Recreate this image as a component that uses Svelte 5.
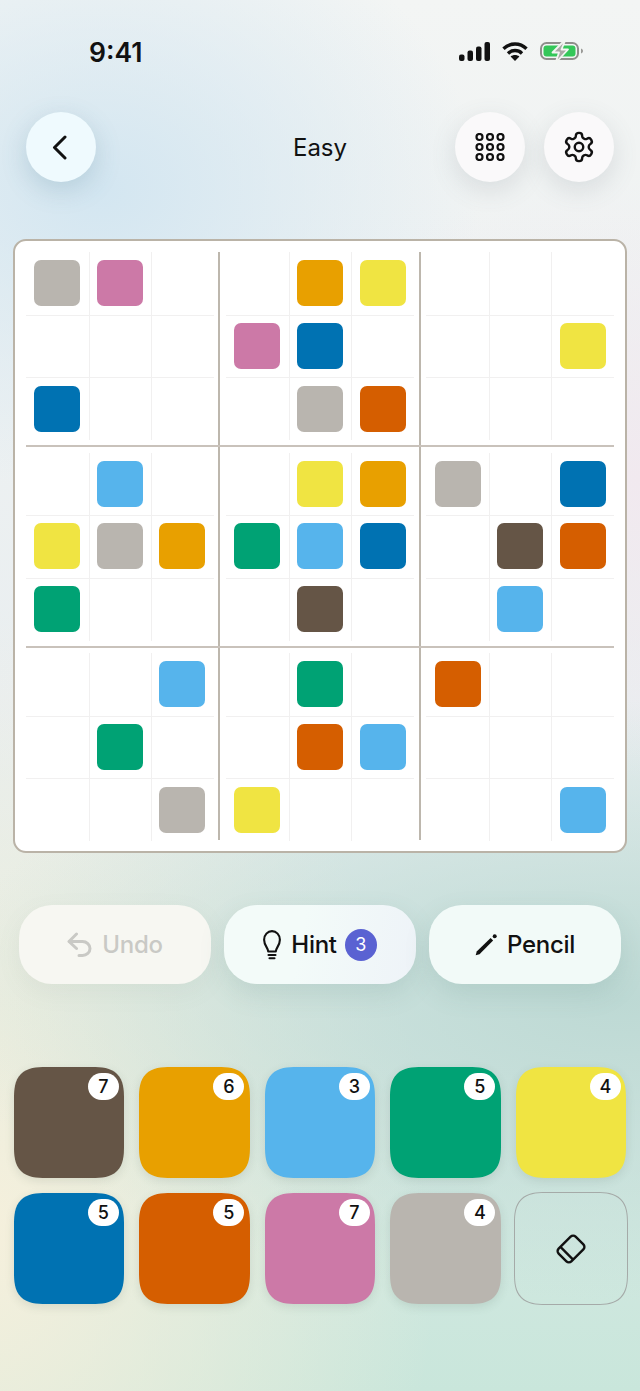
<script>
	// Colour sudoku screen: board of 9 blocks, action pills, colour palette.
	const colors = {
		b: '#655546',
		a: '#e8a000',
		s: '#56b4ec',
		g: '#00a274',
		y: '#f0e442',
		d: '#0072b2',
		o: '#d55e00',
		p: '#cc79a7',
		k: '#b9b5af'
	};

	const rows = [
		'kp..ay...',
		'...pd...y',
		'd...ko...',
		'.s..yak.d',
		'ykagsd.bo',
		'g...b..s.',
		'..s.g.o..',
		'.g..os...',
		'..ky....s'
	];

	// rows come in reading order, blocks want them grouped by 3x3
	const blocks = [];
	for (let br = 0; br < 3; br++) {
		for (let bc = 0; bc < 3; bc++) {
			const cells = [];
			for (let r = 0; r < 3; r++) {
				for (let c = 0; c < 3; c++) {
					cells.push(rows[br * 3 + r][bc * 3 + c]);
				}
			}
			blocks.push(cells);
		}
	}

	const palette = [
		['b', 7],
		['a', 6],
		['s', 3],
		['g', 5],
		['y', 4],
		['d', 5],
		['o', 5],
		['p', 7],
		['k', 4]
	];
</script>

<div class="screen">
	<div class="status">
		<span class="time">9:41</span>
		<div class="status-icons">
			<svg width="31" height="19" viewBox="0 0 31 19" fill="#111">
				<rect x="0" y="12.5" width="5.5" height="6.5" rx="2" />
				<rect x="8.5" y="8.5" width="5.5" height="10.5" rx="2" />
				<rect x="17" y="4.5" width="5.5" height="14.5" rx="2" />
				<rect x="25.5" y="0" width="5.5" height="19" rx="2" />
			</svg>
			<svg width="26" height="19" viewBox="0 0 26 19" fill="none" stroke="#111" stroke-width="3.4">
				<path d="M1.5 6.8C8 .4 18 .4 24.5 6.8" />
				<path d="M6 11.4c4-3.8 10-3.8 14 0" />
				<path d="M13 19l-4.4-4.600c2.500-2 6.300-2 8.800 0z" fill="#111" stroke="none" />
			</svg>
			<svg class="battery" width="44" height="18" viewBox="0 0 44 18" fill="none">
				<rect x="1" y="1" width="37" height="16" rx="5.5" stroke="#8f8f8c" stroke-width="2" />
				<rect x="3.500" y="3.500" width="32" height="11" rx="3" fill="#34c759" />
				<path d="M41 6.500c1.400.4 2 1.300 2 2.500s-.6 2.100-2 2.500z" fill="#9a9a97" />
				<path d="M25.500-2.500 12.500 10.500h6.500L15.500 21 28 7.500h-6.500z" fill="#a9a9a5" stroke="#f3f5f2" stroke-width="1.800" stroke-linejoin="round" />
			</svg>
		</div>
	</div>

	<header class="topbar">
		<button class="round round-back" aria-label="Back">
			<svg width="16" height="25" viewBox="0 0 16 25" fill="none" stroke="#111" stroke-width="3" stroke-linecap="round" stroke-linejoin="round">
				<path d="M13 2 2.500 12.500 13 23" />
			</svg>
		</button>
		<h1>Easy</h1>
		<div class="topbar-right">
			<button class="round" aria-label="Levels">
				<svg width="30" height="28" viewBox="0 0 30 28" fill="none" stroke="#111" stroke-width="2.200">
					{#each [4, 14, 24] as y}
						{#each [4.500, 15, 25.500] as x}
							<circle cx={x} cy={y} r="3" />
						{/each}
					{/each}
				</svg>
			</button>
			<button class="round" aria-label="Settings">
				<svg width="34" height="34" viewBox="0 0 24 24" fill="none" stroke="#111" stroke-width="1.700" stroke-linecap="round" stroke-linejoin="round">
					<path d="M12.220 2h-.44a2 2 0 0 0-2 2v.18a2 2 0 0 1-1 1.730l-.43.25a2 2 0 0 1-2 0l-.15-.08a2 2 0 0 0-2.730.73l-.22.38a2 2 0 0 0 .73 2.730l.15.1a2 2 0 0 1 1 1.720v.51a2 2 0 0 1-1 1.740l-.15.09a2 2 0 0 0-.73 2.730l.22.38a2 2 0 0 0 2.730.73l.15-.08a2 2 0 0 1 2 0l.43.25a2 2 0 0 1 1 1.730V20a2 2 0 0 0 2 2h.44a2 2 0 0 0 2-2v-.18a2 2 0 0 1 1-1.730l.43-.25a2 2 0 0 1 2 0l.15.08a2 2 0 0 0 2.730-.73l.22-.39a2 2 0 0 0-.73-2.730l-.15-.08a2 2 0 0 1-1-1.740v-.5a2 2 0 0 1 1-1.740l.15-.09a2 2 0 0 0 .73-2.730l-.22-.38a2 2 0 0 0-2.730-.73l-.15.08a2 2 0 0 1-2 0l-.43-.25a2 2 0 0 1-1-1.730V4a2 2 0 0 0-2-2z" />
					<circle cx="12" cy="12" r="3" />
				</svg>
			</button>
		</div>
	</header>

	<section class="board">
		{#each blocks as cells}
			<div class="block">
				{#each cells as cell}
					<div class="cell">
						{#if cell !== '.'}
							<span class="tile" style="background: {colors[cell]}"></span>
						{/if}
					</div>
				{/each}
			</div>
		{/each}
		<span class="rule v v1"></span>
		<span class="rule v v2"></span>
		<span class="rule h h1"></span>
		<span class="rule h h2"></span>
	</section>

	<div class="actions">
		<button class="pill pill-off">
			<svg width="25" height="25" viewBox="0 0 25 25" fill="none" stroke="#c9c9c5" stroke-width="3" stroke-linecap="round" stroke-linejoin="round">
				<path d="M9.500 2 2 9.500 9.500 16.500" />
				<path d="M2.500 9.500H15.500a7.500 7 0 0 1 0 14h-3.500" />
			</svg>
			Undo
		</button>
		<button class="pill pill-hint">
			<svg width="18" height="30" viewBox="0 0 18 30" fill="none" stroke="#111" stroke-width="2.100" stroke-linecap="round" stroke-linejoin="round">
				<path d="M5.200 21.500c0-3.500-4.100-6-4.100-11.800a7.900 8.600 0 0 1 15.800 0c0 5.800-4.100 8.300-4.100 11.800z" />
				<path d="M5.500 25h7M6.500 28.300h5" />
			</svg>
			Hint
			<span class="hint-count">3</span>
		</button>
		<button class="pill">
			<svg width="22" height="22" viewBox="0 0 22 22" fill="#111">
				<path d="M.7 21.300 1.700 17.500 15.600 3.900l2.500 2.500L4.500 20.300z" />
				<circle cx="19.700" cy="2.300" r="2" />
			</svg>
			Pencil
		</button>
	</div>

	<div class="palette">
		{#each palette as [key, count]}
			<button class="swatch" style="background: {colors[key]}" aria-label="Colour, {count} left">
				<span class="count">{count}</span>
			</button>
		{/each}
		<button class="swatch eraser" aria-label="Erase">
			<svg width="34" height="34" viewBox="-17 -17 34 34" fill="none" stroke="#111" stroke-width="2.400" stroke-linejoin="round">
				<g transform="rotate(-45)">
					<rect x="-12" y="-9" width="24" height="18" rx="3.500" />
					<path d="M-6 -9V9" />
				</g>
			</svg>
		</button>
	</div>
</div>

<style>
	:global(body) {
		background: #e6ecea;
	}
	.screen {
		position: relative;
		width: 640px;
		height: 1391px;
		overflow: hidden;
		font-family: Inter, 'Noto Sans', sans-serif;
		color: #111;
		background:
			radial-gradient(380px 300px at 100px 190px, #d3e6f1 0%, rgba(211, 230, 241, 0) 100%),
			radial-gradient(420px 300px at 640px 480px, #f1e9ef 0%, rgba(241, 233, 239, 0) 100%),
			radial-gradient(680px 300px at 620px 1000px, #bdd9d4 0%, rgba(189, 217, 212, 0) 100%),
			radial-gradient(460px 620px at -20px 1230px, #f6f0dc 0%, rgba(246, 240, 220, 0) 100%),
			linear-gradient(180deg, #f3f5f4 0%, #e9eef0 50%, #c9e6db 100%);
	}
	.status {
		display: flex;
		align-items: flex-start;
		justify-content: space-between;
		height: 112px;
		padding: 42px 56px 0 89px;
		box-sizing: border-box;
	}
	.time {
		font-size: 26.500px;
		line-height: 21px;
		font-weight: 600;
	}
	.status-icons {
		display: flex;
		gap: 12px;
		align-items: flex-start;
	}
	.battery {
		overflow: visible;
	}
	.topbar {
		display: flex;
		align-items: center;
		justify-content: space-between;
		position: relative;
		height: 70px;
		padding: 0 26px;
	}
	.topbar h1 {
		position: absolute;
		left: 0;
		right: 0;
		margin: 0;
		text-align: center;
		font-size: 24px;
		font-weight: 400;
		pointer-events: none;
	}
	.topbar-right {
		display: flex;
		gap: 19px;
	}
	.round {
		display: grid;
		place-items: center;
		width: 70px;
		height: 70px;
		padding: 0 3px 0 0;
		border: none;
		border-radius: 50%;
		background: #faf9fa;
		box-shadow: 0 8px 26px rgba(90, 100, 110, 0.16);
	}
	.topbar-right .round {
		padding: 0;
	}
	.round-back {
		background: #effafe;
		box-shadow: 0 8px 26px rgba(70, 120, 140, 0.22);
	}
	.board {
		position: relative;
		display: grid;
		grid-template-columns: repeat(3, 187.700px);
		grid-template-rows: repeat(3, 188px);
		column-gap: 12.450px;
		row-gap: 12.500px;
		box-sizing: border-box;
		width: 614px;
		height: 614px;
		margin: 57px 13px 0;
		padding: 11px;
		background: #fff;
		border: 2px solid #bab3a7;
		border-radius: 13px;
	}
	.block {
		display: grid;
		grid-template-columns: repeat(3, 1fr);
		grid-template-rows: repeat(3, 1fr);
	}
	.cell {
		display: grid;
		place-items: center;
		box-shadow: 1px 0 0 #f1f0f0, 0 1px 0 #f1f0f0;
	}
	.cell:nth-child(3n) {
		box-shadow: 0 1px 0 #f1f0f0;
	}
	.cell:nth-child(n + 7) {
		box-shadow: 1px 0 0 #f1f0f0;
	}
	.cell:nth-child(9) {
		box-shadow: none;
	}
	.tile {
		width: 46px;
		height: 46px;
		border-radius: 7px;
	}
	.rule {
		position: absolute;
		background: #bdb7ad;
	}
	.v {
		top: 11px;
		bottom: 11px;
		width: 2px;
	}
	.v1 {
		left: 203px;
	}
	.v2 {
		left: 404px;
	}
	.h {
		left: 11px;
		right: 11px;
		height: 2px;
		background: #c9c2bb;
	}
	.h1 {
		top: 204px;
	}
	.h2 {
		top: 405px;
	}
	.actions {
		display: grid;
		grid-template-columns: repeat(3, 192px);
		gap: 13px;
		margin: 52px 19px 0;
	}
	.pill {
		display: flex;
		align-items: center;
		justify-content: center;
		gap: 10px;
		height: 79px;
		padding: 0;
		border: none;
		border-radius: 33px;
		background: #f2faf8;
		font: 500 24px Inter, 'Noto Sans', sans-serif;
		letter-spacing: -0.3px;
		color: #111;
		box-shadow: 0 10px 26px rgba(90, 130, 125, 0.16);
	}
	.pill-hint {
		background: linear-gradient(100deg, #f3fbf9 40%, #eef3f8 100%);
	}
	.pill-off {
		background: #f7f7f2;
		color: #c9c9c5;
		box-shadow: 0 8px 24px rgba(120, 130, 120, 0.08);
	}
	.hint-count {
		display: grid;
		place-items: center;
		width: 32px;
		height: 32px;
		margin-left: -2px;
		border-radius: 50%;
		background: #5a62d2;
		color: #fff;
		font-size: 18px;
		font-weight: 400;
	}
	.palette {
		display: grid;
		grid-template-columns: repeat(5, 1fr);
		column-gap: 14.800px;
		row-gap: 15px;
		margin: 83px 13.700px 0;
	}
	.swatch {
		position: relative;
		height: 111px;
		padding: 0;
		border: none;
		border-radius: 32px;
		corner-shape: superellipse(1.500);
		box-shadow: 0 3px 10px rgba(70, 90, 80, 0.14);
	}
	.count {
		position: absolute;
		top: 6px;
		right: 5.500px;
		display: grid;
		place-items: center;
		width: 31px;
		height: 27px;
		border-radius: 14px;
		background: #fff;
		color: #111;
		font: 500 18px Inter, 'Noto Sans', sans-serif;
	}
	.eraser {
		display: grid;
		place-items: center;
		box-sizing: border-box;
		height: 113.400px;
		margin: -1.200px;
		background: transparent;
		border: 1.500px solid #a5aaa8;
		box-shadow: none;
	}
</style>
